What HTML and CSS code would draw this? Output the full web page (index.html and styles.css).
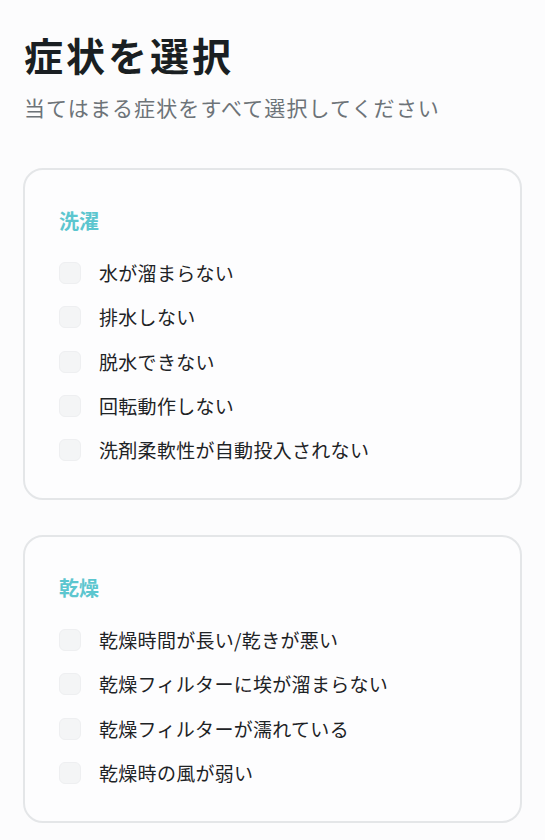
FILE: index.html
```html
<!DOCTYPE html>
<html lang="ja">
<head>
<meta charset="utf-8">
<link rel="stylesheet" href="styles.css">
</head>
<body>
<main class="page">
  <header class="head">
    <h1 class="title">症状を選択</h1>
    <p class="subtitle">当てはまる症状をすべて選択してください</p>
  </header>
  <section class="card">
    <h2 class="card-title">洗濯</h2>
    <ul class="list">
      <li class="item"><span class="box"></span><span class="label">水が溜まらない</span></li>
      <li class="item"><span class="box"></span><span class="label">排水しない</span></li>
      <li class="item"><span class="box"></span><span class="label">脱水できない</span></li>
      <li class="item"><span class="box"></span><span class="label">回転動作しない</span></li>
      <li class="item"><span class="box"></span><span class="label">洗剤柔軟性が自動投入されない</span></li>
    </ul>
  </section>
  <section class="card">
    <h2 class="card-title">乾燥</h2>
    <ul class="list">
      <li class="item"><span class="box"></span><span class="label">乾燥時間が長い/乾きが悪い</span></li>
      <li class="item"><span class="box"></span><span class="label">乾燥フィルターに埃が溜まらない</span></li>
      <li class="item"><span class="box"></span><span class="label">乾燥フィルターが濡れている</span></li>
      <li class="item"><span class="box"></span><span class="label">乾燥時の風が弱い</span></li>
    </ul>
  </section>
</main>
</body>
</html>
```
FILE: styles.css
```css
* { box-sizing: border-box; }
html, body { margin: 0; padding: 0; background: #fcfcfd; }
body {
  font-family: "Noto Sans CJK JP", "Noto Sans", sans-serif;
  color: #1e2326;
}
.page {
  padding: 26px 23px 0 23px;
  display: flex;
  flex-direction: column;
}
.head { padding-left: 1px; }
.title {
  margin: 0;
  font-size: 39px;
  line-height: 56px;
  font-weight: 700;
  letter-spacing: 3px;
  color: #1a1f22;
}
.subtitle {
  margin: 10px 0 0 0;
  font-size: 21px;
  line-height: 30px;
  color: #6d7378;
  letter-spacing: 1.1px;
}
.card {
  margin-top: 46px;
  border: 2px solid #e4e6e8;
  border-radius: 20px;
  background: #fdfdfe;
  padding: 37px 34px 33px 34px;
}
.card + .card { margin-top: 35px; }
.card-title {
  margin: 0;
  font-size: 20px;
  line-height: 28px;
  font-weight: 700;
  color: #5cc6cf;
}
.list {
  list-style: none;
  margin: 23px 0 0 0;
  padding: 0;
  display: flex;
  flex-direction: column;
  gap: 14.25px;
}
.item {
  display: flex;
  align-items: center;
  gap: 18px;
  height: 30px;
}
.box {
  width: 22px;
  height: 22px;
  border-radius: 6px;
  background: #f4f5f6;
  border: 1px solid #eeeff1;
  flex: none;
}
.label {
  font-size: 19px;
  line-height: 30px;
  letter-spacing: 0.3px;
  color: #1e2326;
}
```
